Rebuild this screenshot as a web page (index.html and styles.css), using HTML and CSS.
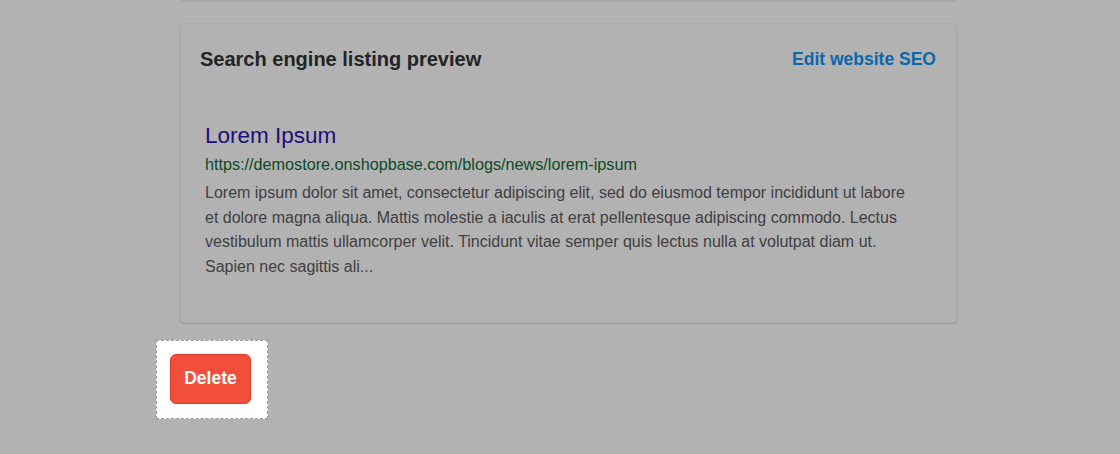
FILE: index.html
```html
<!DOCTYPE html>
<html>
<head>
<meta charset="utf-8">
<link rel="stylesheet" href="styles.css">
</head>
<body>
<div class="page">
  <div class="card card-top"></div>
  <div class="card">
    <div class="card-head">
      <h2 class="card-title">Search engine listing preview</h2>
      <a class="card-link" href="#">Edit website SEO</a>
    </div>
    <div class="seo">
      <div class="seo-title">Lorem Ipsum</div>
      <div class="seo-url">https://demostore.onshopbase.com/blogs/news/lorem-ipsum</div>
      <div class="seo-desc">Lorem ipsum dolor sit amet, consectetur adipiscing elit, sed do eiusmod tempor incididunt ut labore et dolore magna aliqua. Mattis molestie a iaculis at erat pellentesque adipiscing commodo. Lectus vestibulum mattis ullamcorper velit. Tincidunt vitae semper quis lectus nulla at volutpat diam ut. Sapien nec sagittis ali...</div>
    </div>
  </div>
  <div class="highlight">
    <button class="btn-delete">Delete</button>
  </div>
</div>
</body>
</html>
```
FILE: styles.css
```css
html, body {
  margin: 0;
  padding: 0;
  background: #b2b2b2;
  font-family: "Liberation Sans", Arial, sans-serif;
}
.page {
  width: 777px;
  margin-left: 180px;
  display: flex;
  flex-direction: column;
}
.card {
  background: #b2b2b2;
  border: 1px solid #a9a9a9;
  border-radius: 4px;
  box-shadow: 0 1px 2px rgba(0,0,0,0.12);
  box-sizing: border-box;
}
.card-top {
  height: 30px;
  margin-top: -30px;
  margin-bottom: 23px;
}
.card-head {
  display: flex;
  justify-content: space-between;
  align-items: center;
  padding: 23px 20px 0 19px;
}
.card-title {
  margin: 0;
  font-size: 20px;
  font-weight: bold;
  color: #222426;
  line-height: 24px;
}
.card-link {
  font-size: 17.5px;
  font-weight: bold;
  color: #0a68ad;
  text-decoration: none;
  line-height: 24px;
}
.seo {
  padding: 51px 39px 42px 24px;
}
.seo-title {
  font-size: 22.5px;
  line-height: 28px;
  color: #1e0f78;
}
.seo-url {
  font-size: 16.2px;
  line-height: 28px;
  color: #0b4a25;
}
.seo-desc {
  font-size: 16px;
  line-height: 24.67px;
  color: #3f3f42;
  margin-top: 3px;
}
.highlight {
  align-self: flex-start;
  margin-left: -24px;
  margin-top: 17px;
  background: #ffffff;
  border: 1px dashed #9a9a9a;
  padding: 13px 16px 14px 13px;
}
.btn-delete {
  display: block;
  width: 81px;
  height: 50px;
  box-sizing: border-box;
  background: #f24e3c;
  border: 1px solid #e03a26;
  border-radius: 6px;
  color: #ffffff;
  font-family: "Liberation Sans", Arial, sans-serif;
  font-size: 17.5px;
  font-weight: bold;
  padding: 0;
}
```
